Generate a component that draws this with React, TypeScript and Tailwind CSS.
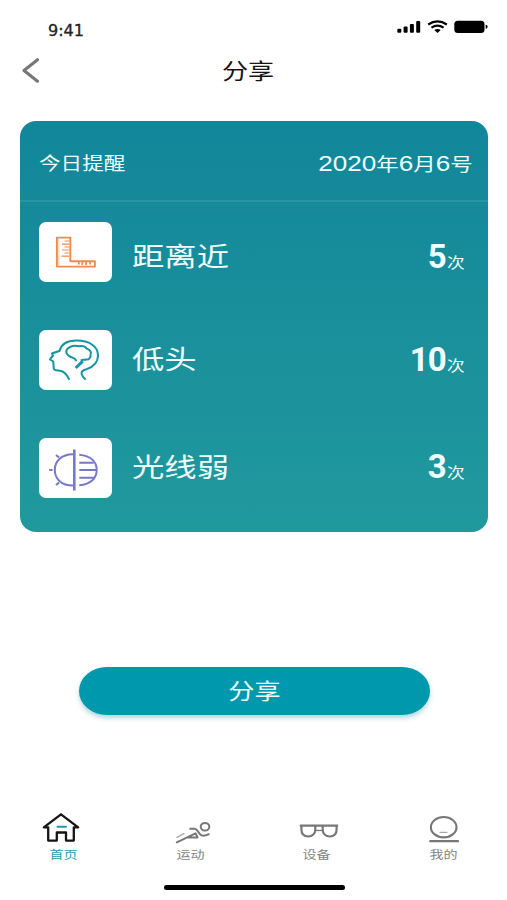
import type { ReactNode } from "react";

const cjk = "font-['Liberation_Sans','Noto_Sans_CJK_SC',sans-serif]";

function BackIcon() {
  return (
    <svg width="18" height="25" viewBox="0 0 18 25" fill="none" stroke="#777" strokeWidth="3.1" strokeLinecap="round" strokeLinejoin="round">
      <path d="M15.5 1.7 2 12.5 15.5 23.2" />
    </svg>
  );
}

function StatusIcons() {
  return (
    <svg width="92" height="14" viewBox="0 0 92 14" fill="#000">
      <rect x="0.3" y="8.7" width="4" height="4" rx="1" />
      <rect x="6.6" y="6.5" width="4" height="6.2" rx="1" />
      <rect x="12.9" y="4" width="4" height="8.7" rx="1" />
      <rect x="19.2" y="1" width="4" height="11.7" rx="1" />
      <g fill="none" stroke="#000" strokeWidth="2.2">
        <path d="M31.2 4.5Q40.5-1.7 49.8 4.5" />
        <path d="M34.4 7.6Q40.5 3.6 46.6 7.6" />
      </g>
      <path d="M37.3 10Q40.5 8 43.7 10L40.5 13Z" />
      <rect x="57.3" y="0.7" width="30.2" height="12.2" rx="3.5" />
      <path d="M88.7 4.8Q90.6 5 90.6 6.8T88.7 8.8Z" />
    </svg>
  );
}

function RulerIcon() {
  return (
    <svg width="73" height="60" viewBox="0 0 73 60" fill="none" stroke="#f28a4d" strokeWidth="1.9">
      <path d="M17.9 15.6H31.3V39.2H55.9V44.6H17.9Z" strokeLinejoin="round" />
      <path d="M19.8 17V43" strokeWidth="1" opacity=".45" />
      <path d="M25.5 19H30M23 22.2H30M25.5 25H30M23 28H30M25.5 31H30M22.5 34.2H30" strokeWidth="1.2" />
      <path d="M39.8 40V42.4M43.3 40V43M47 40V43M51 40V42.5" strokeWidth="1.8" />
    </svg>
  );
}

function HeadIcon() {
  return (
    <svg width="73" height="60" viewBox="0 0 73 60" fill="none" stroke="#1594a3" strokeWidth="2" strokeLinecap="round" strokeLinejoin="round">
      <path d="M30 49C27.5 44 25.5 41.3 21 40.8L17 40.3Q14.4 40 14.7 37.5L14.5 34.8L14.2 31.5L11 29.5Q12.3 27.3 14 25.5L13 23.5Q16 22.2 20.5 21C22.5 13.5 28 10.6 37.5 10.6C50 10.6 59 16 59 25.5C59 32.5 55.5 36.5 47.5 39.2C41 40.9 41.3 44 46 49" />
      <path d="M37 30.5C36.5 28 34 28 31.8 27C28 25 26.5 22.5 27.7 20C28.5 17.5 30.5 17.5 32 16.6C35 14.8 38 16.3 40 16.3C43.5 15.4 46 16 47.8 18.6C51.5 20 52.5 22 51.6 24.3C52 27.5 50 30 47 29.5C45.5 30.3 44 29.3 42.5 30.2" />
      <path d="M43.8 31.2 36.7 38" strokeWidth="3" strokeLinecap="butt" />
    </svg>
  );
}

function LightIcon() {
  return (
    <svg width="73" height="60" viewBox="0 0 73 60" fill="none" stroke="#7878cb" strokeWidth="2">
      <path d="M35.3 11.5V52.5" strokeWidth="2.6" />
      <path d="M34 16.3C22 16.5 15.8 23.5 15.8 32S22 47.4 34 47.6" />
      <path d="M40.3 16.8C52 18 57.7 24 57.7 32S52 46.2 40.3 47.2" />
      <path d="M40.3 24.7H54.7M40.3 32H57.5M40.3 39.8H55" />
      <path d="M17 17 20 19.6M10.2 31.9H13.5M17 47 20 44.6" />
    </svg>
  );
}

function HomeIcon() {
  return (
    <svg width="40" height="32" viewBox="0 0 40 32" fill="none" stroke="#151515" strokeWidth="2.3" strokeLinejoin="round" strokeLinecap="round">
      <path d="M2.8 15.3 20 2.3 37.2 15.3H32.8V28.6H25V20.5H15.8V28.6H7.2V15.3Z" />
      <path d="M16.5 14.7H25" stroke="#1c9ab0" strokeWidth="2" />
    </svg>
  );
}

function RunIcon() {
  return (
    <svg width="40" height="32" viewBox="0 0 40 32" fill="none" stroke="#777" strokeWidth="2" strokeLinecap="round" strokeLinejoin="round">
      <ellipse cx="32" cy="14.7" rx="4.3" ry="3.8" />
      <path d="M3.8 30.3 22.5 21.3 24.6 25.4H15.5" />
      <path d="M17.2 16.7H21.5Q23.3 16.7 24.5 18.8L27 22.2Q29.8 25.2 35.8 22.2" />
      <path d="M4 25.3 11 21.7" stroke="#aaa" strokeWidth="1.5" />
    </svg>
  );
}

function GlassesIcon() {
  return (
    <svg width="40" height="32" viewBox="0 0 40 32" fill="none" stroke="#777" strokeWidth="2.2">
      <path d="M.8 13.7H39.2" strokeWidth="2.2" />
      <path d="M2.4 14V17.3C2.4 21.8 5 24.5 9.2 24.5S16.3 21.8 16.3 17.3V14M23.7 14V17.3C23.7 21.8 26.5 24.5 30.8 24.5S37.6 21.8 37.6 17.3V14" />
      <path d="M16.5 18.5H23.5" strokeWidth="1.3" />
    </svg>
  );
}

function ProfileIcon() {
  return (
    <svg width="40" height="32" viewBox="0 0 40 32" fill="none" stroke="#777" strokeWidth="2.1" strokeLinecap="round">
      <ellipse cx="19.7" cy="15.2" rx="12.8" ry="10.2" />
      <path d="M6.2 29.2H34" strokeWidth="2.2" />
      <path d="M16 20.3H23" stroke="#aaa" strokeWidth="1.3" />
    </svg>
  );
}

type ReminderProps = { icon: ReactNode; label: string; count: number; labelClass?: string; countClass?: string };

function Reminder({ icon, label, count, labelClass = "", countClass = "" }: ReminderProps) {
  return (
    <div className="flex h-[60px] items-start">
      <div className="h-[60px] w-[73px] shrink-0 rounded-[7px] bg-white">{icon}</div>
      <div className={`ml-5 origin-left scale-x-[1.22] text-[26.5px] leading-[60px] ${labelClass}`}>{label}</div>
      <div className={`ml-auto flex items-baseline ${countClass}`}>
        <span className="mr-px font-[Roboto,sans-serif] text-[33px] leading-[50px] font-bold tracking-[-0.8px]">{count}</span>
        <span className="w-[18px] text-[14.5px]">
          <span className="inline-block origin-left scale-x-[1.22]">次</span>
        </span>
      </div>
    </div>
  );
}

function Tab({ icon, label, active = false }: { icon: ReactNode; label: string; active?: boolean }) {
  return (
    <div className="flex flex-1 flex-col items-center">
      {icon}
      <span className={`mt-[3px] scale-x-[1.22] text-[11.5px] leading-4 ${active ? "text-[#269eb3]" : "text-[#858585]"}`}>{label}</span>
    </div>
  );
}

export default function App() {
  return (
    <div className={`flex h-[900px] w-[507px] flex-col overflow-hidden bg-white ${cjk}`}>
      <div className="flex h-[50px] justify-between pr-[18px] pl-12">
        <span className="mt-[21px] origin-left scale-x-[1.07] font-['DejaVu_Sans',sans-serif] text-[15px] leading-5 text-[#222] [-webkit-text-stroke:0.3px_#222]">9:41</span>
        <div className="mt-5"><StatusIcons /></div>
      </div>
      <div className="grid h-[71px] grid-cols-[60px_1fr_71px] items-start">
        <div className="mt-2 ml-[22px]"><BackIcon /></div>
        <h1 className="mt-1.5 scale-x-[1.22] text-center text-[21.4px] leading-8 text-[#151515]">分享</h1>
      </div>

      <section className="mr-[19px] ml-5 h-[411px] shrink-0 rounded-[16px] bg-linear-to-b from-[#12869a] to-[#20999d] text-[#f0ffff]">
        <div className="flex h-[81px] items-center justify-between border-b-2 border-[#2996a6] pr-[15px] pl-[19px]">
          <span className="mt-2 origin-left scale-x-[1.22] text-[17.7px]">今日提醒</span>
          <span className="mt-2 flex origin-right scale-x-[1.22] items-baseline text-[18.4px]">
            <span className="text-[21.4px]">2020</span>年
            <span className="text-[21.4px]">6</span>月
            <span className="text-[21.4px]">6</span>号
          </span>
        </div>
        <div className="flex flex-col gap-12 pt-5 pr-[23px] pl-[19px]">
          <Reminder icon={<RulerIcon />} label="距离近" count={5} labelClass="mt-[5px]" countClass="mt-[10px]" />
          <Reminder icon={<HeadIcon />} label="低头" count={10} countClass="mt-[5px]" />
          <Reminder icon={<LightIcon />} label="光线弱" count={3} countClass="mt-1" />
        </div>
      </section>

      <button className="mt-[135px] ml-[79px] h-12 w-[351px] shrink-0 rounded-[28px/24px] bg-[#0098ac] text-[21.4px] text-[#f0ffff] shadow-[0_3px_5px_rgba(0,120,140,0.3)]">
        <span className="mt-0.5 inline-block scale-x-[1.22]">分享</span>
      </button>

      <nav className="mt-[97px] flex h-[73px]">
        <Tab icon={<div className="-ml-1"><HomeIcon /></div>} label="首页" active />
        <Tab icon={<div className="ml-1.5"><RunIcon /></div>} label="运动" />
        <Tab icon={<div className="ml-1"><GlassesIcon /></div>} label="设备" />
        <Tab icon={<ProfileIcon />} label="我的" />
      </nav>
      <div className="ml-[164px] h-[5px] w-[181px] shrink-0 rounded-full bg-black" />
    </div>
  );
}
